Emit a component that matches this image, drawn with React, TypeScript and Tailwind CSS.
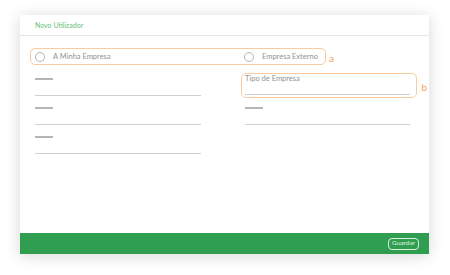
import React from "react"

const font = { fontFamily: "Lato, 'Noto Sans', sans-serif" }

function Field({ width }: { width: string }) {
  return (
    <div className={`h-[29px] ${width}`}>
      <div className="h-[1.5px] w-[18px] bg-[#b5b5b5]" />
      <div className="mt-[15px] h-px w-full bg-[#cfcfcf]" />
    </div>
  )
}

function Radio({ label }: { label: string }) {
  return (
    <div className="flex items-center gap-[8px]">
      <span className="h-[10px] w-[10px] rounded-full border border-[#b5b5b5]" />
      <span className="text-[7.5px] leading-none text-[#929292]">{label}</span>
    </div>
  )
}

export default function App() {
  return (
    <div className="h-[275px] w-[450px] bg-white pl-[20px] pt-[15px]" style={font}>
      <div className="flex h-[239px] w-[409px] flex-col bg-white shadow-[0_2px_14px_rgba(0,0,0,0.16)]">
        {/* header */}
        <div className="flex h-[21px] items-center border-b border-[#e6e6e6] pl-[15px]">
          <span className="text-[7px] leading-none text-[#66c276]">Novo Utilizador</span>
        </div>

        {/* body */}
        <div className="flex-1 px-[10px] pt-[12px]">
          <div className="flex items-center">
            <div className="flex h-[17px] w-[296px] items-center rounded-[5px] border border-[#fbcb9e] pl-[4px]">
              <div className="w-[209px]">
                <Radio label="A Minha Empresa" />
              </div>
              <Radio label="Empresa Externo" />
            </div>
            <span className="ml-[3px] mt-[2px] text-[10px] leading-none text-[#f5a25a]">a</span>
          </div>

          <div className="mt-[13px] flex pl-[5px]">
            <div className="flex w-[210px] flex-col">
              <Field width="w-[166px]" />
              <Field width="w-[166px]" />
              <Field width="w-[166px]" />
            </div>
            <div className="flex flex-col">
              <div className="relative h-[29px] w-[165px]">
                <div className="pointer-events-none absolute -left-[4px] -right-[7px] -top-[5px] bottom-[9px] rounded-[5px] border border-[#fbcb9e]" />
                <span className="absolute -right-[17px] top-[4px] text-[10px] leading-none text-[#f5a25a]">b</span>
                <div className="-mt-[3px] text-[7.5px] leading-none text-[#929292]">Tipo de Empresa</div>
                <div className="mt-[11px] h-px w-full bg-[#cfcfcf]" />
              </div>
              <Field width="w-[165px]" />
            </div>
          </div>
        </div>

        {/* footer */}
        <div className="flex h-[21px] items-center justify-end bg-[#2f9e50] pr-[10px]">
          <button className="flex h-[12px] w-[31px] items-center justify-center rounded-[4px] border border-[#d8eedd] text-[6.5px] leading-none text-[#e6f4e9]">
            Guardar
          </button>
        </div>
      </div>
    </div>
  )
}
